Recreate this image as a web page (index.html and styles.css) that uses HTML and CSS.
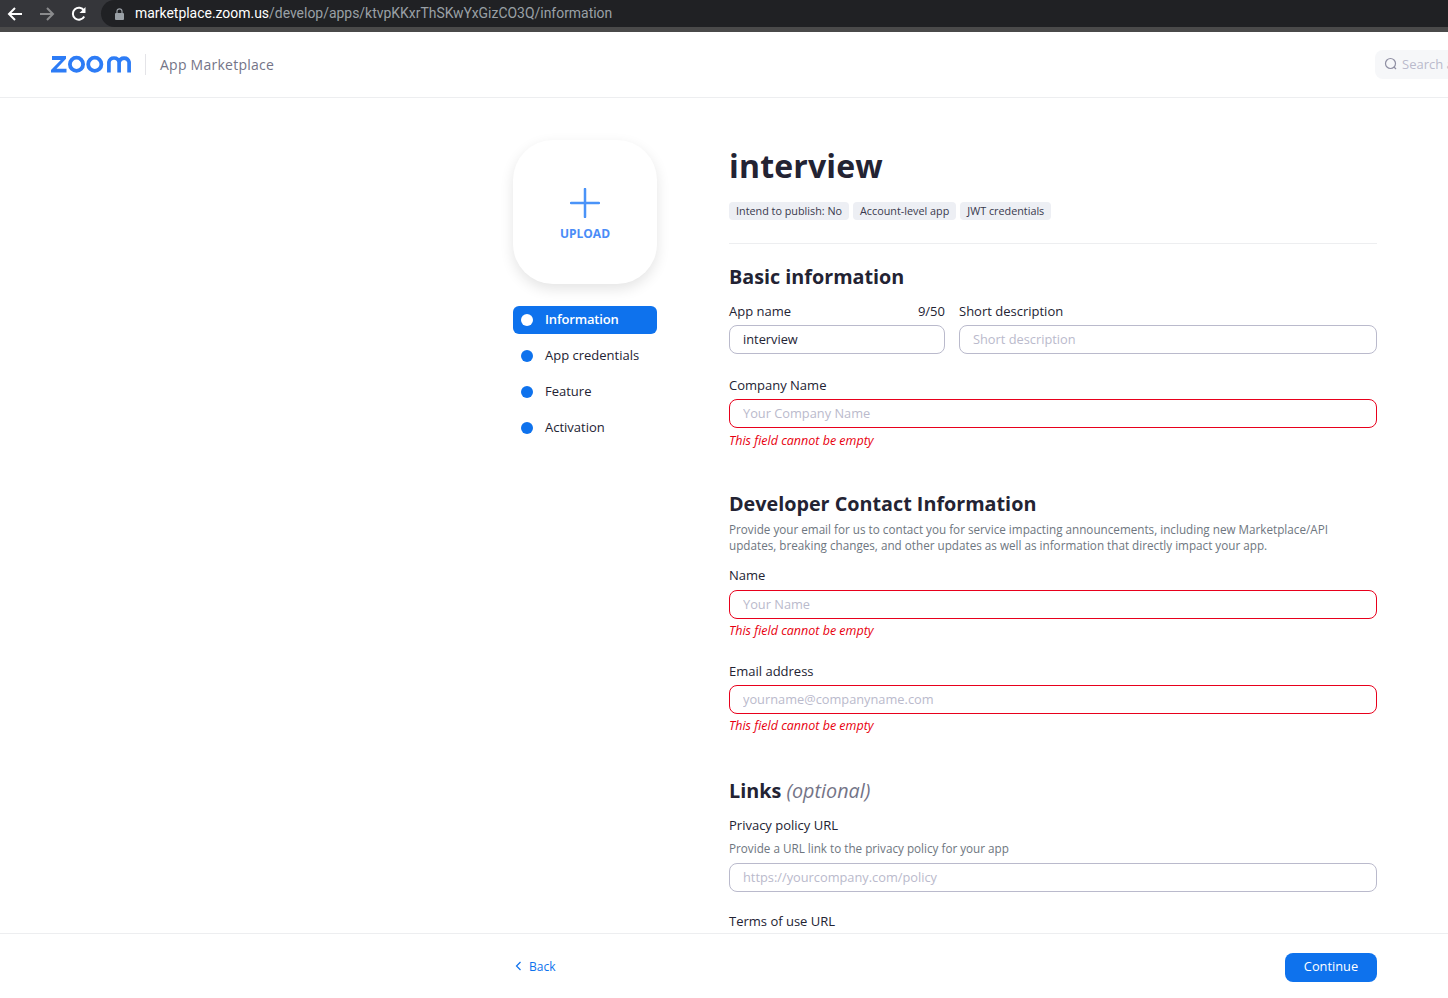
FILE: index.html
```html
<!DOCTYPE html>
<html lang="en">
<head>
	<meta charset="UTF-8">
	<title>App Marketplace</title>
	<link rel="stylesheet" href="styles.css">
</head>
<body>
	<div class="browser">
		<div class="browser-nav">
			<svg class="nav-icon" width="16" height="16" viewBox="0 0 16 16"><path d="M15 8H2M8 2L2 8l6 6" fill="none" stroke="#fff" stroke-width="2"/></svg>
			<svg class="nav-icon" width="16" height="16" viewBox="0 0 16 16"><path d="M1 8h13M8 2l6 6-6 6" fill="none" stroke="#8a8b8d" stroke-width="2"/></svg>
			<svg class="nav-icon" width="16" height="16" viewBox="0 0 16 16"><path d="M13.2 10.5A6 6 0 1 1 13 4.6" fill="none" stroke="#fff" stroke-width="2"/><path d="M14.5 1v6h-6z" fill="#fff"/></svg>
		</div>
		<div class="address">
			<svg width="9" height="12" viewBox="0 0 9 12"><path d="M2 5V3.3a2.5 2.5 0 0 1 5 0V5" fill="none" stroke="#9aa0a6" stroke-width="1.2"/><rect y="5" width="9" height="7" rx="1" fill="#9aa0a6"/></svg>
			<span class="url"><b>marketplace.zoom.us</b>/develop/apps/ktvpKKxrThSKwYxGizCO3Q/information</span>
		</div>
	</div>

	<header class="top">
		<svg class="logo" width="80" height="18" viewBox="0 0 80 18" role="img" aria-label="zoom">
			<path d="M2 17.500H0V15L9.800 5H1V1H15V3.700L5.500 13.700H15.500V17.500z" fill="#2d7cf6"/>
			<circle cx="25.500" cy="9.200" r="6.600" fill="none" stroke="#2d7cf6" stroke-width="3.800"/>
			<circle cx="43.800" cy="9.200" r="6.600" fill="none" stroke="#2d7cf6" stroke-width="3.800"/>
			<path d="M57.900 17.500V7.200a5.200 5.200 0 0 1 10.200 0V17.500M68.100 7.200a5.100 5.100 0 0 1 10 0V17.500" fill="none" stroke="#2d7cf6" stroke-width="3.700"/>
		</svg>
		<span class="top-title">App Marketplace</span>
		<div class="search">
			<svg width="14" height="14" viewBox="0 0 14 14"><circle cx="6.500" cy="6.500" r="5" fill="none" stroke="#8f8fa3" stroke-width="1.200"/><path d="M10 10l2 2" stroke="#8f8fa3" stroke-width="1.200"/></svg>
			<span>Search apps</span>
		</div>
	</header>

	<main class="main">
		<div class="wrap">
			<aside class="side">
				<div class="upload">
					<svg width="30" height="30" viewBox="0 0 30 30"><path d="M15 1v28M1 15h28" stroke="#4a93f8" stroke-width="2.500" stroke-linecap="round"/></svg>
					<span>UPLOAD</span>
				</div>
				<ul class="steps">
					<li class="step active"><i></i>Information</li>
					<li class="step"><i></i>App credentials</li>
					<li class="step"><i></i>Feature</li>
					<li class="step"><i></i>Activation</li>
				</ul>
			</aside>

			<section class="content">
				<h1>interview</h1>
				<div class="tags">
					<span>Intend to publish: No</span>
					<span>Account-level app</span>
					<span>JWT credentials</span>
				</div>

				<h2 class="first">Basic information</h2>
				<div class="row">
					<div class="field narrow">
						<div class="label"><label>App name</label><span>9/50</span></div>
						<input type="text" value="interview">
					</div>
					<div class="field wide">
						<div class="label"><label>Short description</label></div>
						<input type="text" placeholder="Short description">
					</div>
				</div>
				<div class="field company">
					<div class="label"><label>Company Name</label></div>
					<input class="bad" type="text" placeholder="Your Company Name">
					<p class="err">This field cannot be empty</p>
				</div>

				<h2 class="dev">Developer Contact Information</h2>
				<p class="desc">Provide your email for us to contact you for service impacting announcements, including new Marketplace/API updates, breaking changes, and other updates as well as information that directly impact your app.</p>
				<div class="field name">
					<div class="label"><label>Name</label></div>
					<input class="bad" type="text" placeholder="Your Name">
					<p class="err">This field cannot be empty</p>
				</div>
				<div class="field email">
					<div class="label"><label>Email address</label></div>
					<input class="bad" type="text" placeholder="yourname@companyname.com">
					<p class="err">This field cannot be empty</p>
				</div>

				<h2 class="links">Links <em>(optional)</em></h2>
				<div class="field">
					<div class="label"><label>Privacy policy URL</label></div>
					<p class="hint">Provide a URL link to the privacy policy for your app</p>
					<input type="text" placeholder="https://yourcompany.com/policy">
				</div>
				<div class="field terms">
					<div class="label"><label>Terms of use URL</label></div>
				</div>
			</section>
		</div>
	</main>

	<footer class="bottom">
		<div class="bottom-in">
			<a class="back" href="#"><svg width="7" height="10" viewBox="0 0 7 10"><path d="M5.500 1L1.500 5l4 4" fill="none" stroke="#0e72ed" stroke-width="1.200"/></svg>Back</a>
			<button class="continue">Continue</button>
		</div>
	</footer>
</body>
</html>
```

FILE: styles.css
```css
* {
	box-sizing: border-box;
}
html, body {
	height: 100%;
}
body {
	margin: 0;
	display: flex;
	flex-direction: column;
	overflow: hidden;
	font-family: "Open Sans", sans-serif;
	font-size: 13px;
	color: #232333;
	background-color: #fff;
}

/* browser bar */
.browser {
	flex: 0 0 32px;
	display: flex;
	background-color: #35363a;
	border-bottom: 5px solid #4a4a4a;
	overflow: hidden;
}
.browser-nav {
	display: flex;
	gap: 16px;
	align-items: center;
	padding: 0 14px 0 7px;
}
.address {
	flex: 1;
	display: flex;
	align-items: center;
	gap: 11px;
	padding-left: 14px;
	background-color: #202124;
	border-radius: 14px 0 0 14px;
}
.url {
	margin-bottom: 2px;
	font-family: Roboto, sans-serif;
	font-size: 13.950px;
	color: #9aa0a6;
}
.url b {
	font-weight: 400;
	color: #fff;
}

/* header */
.top {
	flex: 0 0 66px;
	display: flex;
	align-items: center;
	padding-left: 51px;
	border-bottom: 1px solid #edeef0;
	overflow: hidden;
}
.logo {
	margin-bottom: 2px;
}
.top-title {
	margin-left: 14px;
	padding-left: 14px;
	border-left: 1px solid #e4e4e8;
	font-size: 14px;
	line-height: 21px;
	letter-spacing: 0.250px;
	color: #747487;
}
.search {
	flex: none;
	display: flex;
	align-items: center;
	gap: 4px;
	width: 160px;
	height: 29px;
	margin-left: auto;
	margin-right: -87px;
	padding: 0 0 2px 9px;
	background-color: #f6f7f9;
	border-radius: 8px;
	color: #babacc;
	white-space: nowrap;
}

/* main */
.main {
	flex: 1;
	min-height: 0;
	overflow: hidden;
}
.wrap {
	display: flex;
	gap: 72px;
	width: 864px;
	margin-left: 513px;
	padding-top: 42px;
}
.side {
	flex: 0 0 144px;
}
.upload {
	display: flex;
	flex-direction: column;
	align-items: center;
	width: 144px;
	height: 144px;
	padding-top: 48px;
	border-radius: 40px;
	background-color: #fff;
	box-shadow: 0 5px 14px rgba(0, 0, 0, 0.11);
	color: #4a8cf7;
	font-size: 12px;
	font-weight: 700;
}
.upload span {
	margin-top: 7px;
}
.steps {
	list-style: none;
	margin: 22px 0 0;
	padding: 0;
}
.step {
	display: flex;
	align-items: center;
	height: 28px;
	margin-bottom: 8px;
	padding: 0 0 2px 8px;
	border-radius: 6px;
	font-weight: 500;
	font-size: 13px;
}
.step i {
	width: 12px;
	height: 12px;
	margin: 2px 12px 0 0;
	border-radius: 50%;
	background-color: #0e72ed;
}
.step.active {
	background-color: #0e72ed;
	color: #fff;
	font-weight: 600;
	letter-spacing: -0.150px;
}
.step.active i {
	background-color: #fff;
}

.content {
	flex: 0 0 648px;
}
h1 {
	margin: 2px 0 0;
	font-size: 32px;
	line-height: 48px;
	font-weight: 700;
	letter-spacing: 0.170px;
}
.tags {
	display: flex;
	gap: 4px;
	margin-top: 12px;
	padding-bottom: 23px;
	border-bottom: 1px solid #edeef0;
}
.tags span {
	padding: 0 7px;
	line-height: 18px;
	border-radius: 4px;
	background-color: #edeff4;
	font-size: 10.800px;
	color: #39394d;
}
h2 {
	margin: 0;
	font-size: 19.750px;
	line-height: 28px;
	font-weight: 700;
}
h2.first {
	margin-top: 19px;
}
h2.dev {
	margin-top: 40px;
}
h2.links {
	margin-top: 42px;
}
h2 em {
	font-weight: 400;
	color: #747487;
}
.row {
	display: flex;
	gap: 14px;
	margin-top: 11px;
}
.narrow {
	flex: 0 0 216px;
}
.wide {
	flex: 1;
}
.label {
	display: flex;
	justify-content: space-between;
	font-weight: 500;
	line-height: 18px;
	margin-bottom: 5px;
}
.label span {
	font-weight: 400;
}
input {
	display: block;
	width: 100%;
	height: 29px;
	padding: 0 13px 2px;
	border: 1px solid #babacc;
	border-radius: 8px;
	font-family: inherit;
	font-size: 12.800px;
	color: #232333;
	background-color: #fff;
	outline: none;
}
input::placeholder {
	color: #babacc;
	opacity: 1;
}
input.bad {
	border-color: #e8001c;
}
.err {
	margin: 4px 0 0;
	font-style: italic;
	font-size: 12.500px;
	line-height: 18px;
	color: #e8000f;
}
.company {
	margin-top: 22px;
}
.desc {
	margin: 3px 8px 0 0;
	font-size: 11.700px;
	line-height: 16px;
	color: #6e7680;
}
.name {
	margin-top: 13px;
}
.name .label {
	margin-bottom: 6px;
}
.name .err {
	margin-top: 3px;
}
.email {
	margin-top: 22px;
}
.email .err {
	margin-top: 3px;
}
.hint {
	margin: 1px 0 6px;
	font-size: 11.700px;
	line-height: 18px;
	color: #6e7680;
}
h2.links + .field {
	margin-top: 11px;
}
.terms {
	margin-top: 20px;
}

/* footer */
.bottom {
	flex: 0 0 65px;
	border-top: 1px solid #edeef0;
	background-color: #fff;
}
.bottom-in {
	display: flex;
	justify-content: space-between;
	align-items: center;
	width: 864px;
	height: 64px;
	margin-left: 513px;
	padding-top: 2px;
}
.back {
	display: flex;
	align-items: center;
	gap: 7px;
	margin-bottom: 2px;
	padding-left: 2px;
	color: #0e72ed;
	font-size: 12px;
	text-decoration: none;
}
.continue {
	width: 92px;
	height: 29px;
	padding: 0 0 2px;
	border: 0;
	border-radius: 8px;
	background-color: #0e72ed;
	color: #fff;
	font-family: inherit;
	font-size: 12.800px;
}
```
